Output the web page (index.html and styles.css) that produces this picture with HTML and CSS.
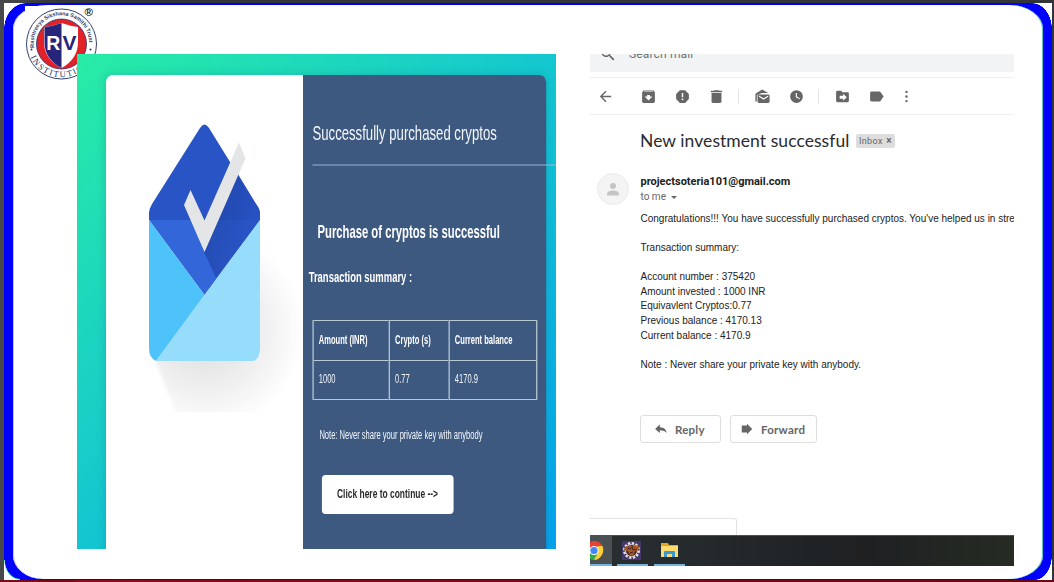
FILE: index.html
```html
<!DOCTYPE html>
<html lang="en">
<head>
<meta charset="utf-8">
<title>Successfully purchased cryptos</title>
<link rel="stylesheet" href="styles.css">
</head>
<body>
<div class="page">
<div class="frame">
<main class="slide">
  <svg class="logo" viewBox="0 0 74 74" aria-label="RV Institutions">
    <defs>
      <path id="arc-top" d="M9 43.500A27.600 27.600 0 1 1 62 43.500"/>
      <path id="arc-bottom" d="M2.500 44.500A33.800 33.800 0 0 0 68 45"/>
    </defs>
    <rect x="-1" y="-1" width="66" height="40" fill="#fff"/>
    <circle cx="35.500" cy="37" r="35" fill="#fff" stroke="#344270" stroke-width="1"/>
    <circle cx="35.500" cy="37" r="25" fill="#e32129" stroke="#26306a" stroke-width=".8"/>
    <path d="M18 20q9-1 17.500-4 8.500 3 16.500 4v15q0 17-16.500 26Q18 52 18 35z" fill="#fff"/>
    <path d="M18.500 20q9-1 17-4v45Q18.500 52 18.500 35z" fill="#26247b"/>
    <text x="20.300" y="43" class="logo-letter" fill="#fff" textLength="14" lengthAdjust="spacingAndGlyphs">R</text>
    <text x="36.500" y="43" class="logo-letter" fill="#26247b" textLength="14" lengthAdjust="spacingAndGlyphs">V</text>
    <text class="logo-ring"><textPath href="#arc-top" startOffset="3" textLength="91">Rashtreeya Sikshana Samithi Trust</textPath></text>
    <text class="logo-name"><textPath href="#arc-bottom" startOffset="6" textLength="77">INSTITUTIONS</textPath></text>
    <circle cx="5.500" cy="42.500" r="1" fill="#26306a"/><circle cx="64.500" cy="42.500" r="1" fill="#26306a"/>
    <text x="58.500" y="8.500" class="logo-reg">®</text>
  </svg>

  <section class="purchase">
    <div class="card">
      <div class="art">
        <svg width="197" height="345" viewBox="106 75 197 345">
          <defs>
            <radialGradient id="cast" gradientUnits="userSpaceOnUse" cx="205" cy="330" r="100"><stop offset="0" stop-color="#dcdcdc"/><stop offset=".4" stop-color="#e8e8e8"/><stop offset="1" stop-color="#fff"/></radialGradient>
            <linearGradient id="fold" x1="0" y1="0" x2="1" y2=".5"><stop offset="0" stop-color="#1d419e"/><stop offset="1" stop-color="#2851c5"/></linearGradient>
            <filter id="soft"><feGaussianBlur stdDeviation="1.5"/></filter>
            <clipPath id="art-edge"><path d="M106 75h197v337H106z"/></clipPath>
          </defs>
          <g clip-path="url(#art-edge)"><path d="M153 355L178 418H270L310 340 298 290 258 222z" fill="url(#cast)" filter="url(#soft)"/></g>
          <path d="M149 220v-7q0-4 3-9l48-76q4.500-7 9 0l47 76q4 5 4 10v6z" fill="#2854c5"/>
          <path d="M149 220H260L204.500 295z" fill="#3367d9"/>
          <path d="M238 174l18 30q4 5 4 10v6l-44 58-12-26z" fill="url(#fold)" opacity=".78"/>
          <path d="M149 220L204.500 295 156 361q-7-3-7-13z" fill="#4dc3f9"/>
          <path d="M260 220v127q0 14-8 14h-96z" fill="#96dcfb"/>
          <path d="M184 205l6.500-15 14 30.500 34.500-78 6.500 16L204.500 252z" fill="#e4e5e6"/>
        </svg>
      </div>
      <div class="details">
        <h1>Successfully purchased cryptos</h1>
        <div class="rule"></div>
        <h2>Purchase of cryptos is successful</h2>
        <h3>Transaction summary :</h3>
        <table>
          <tr><th class="col-amount">Amount (INR)</th><th class="col-crypto">Crypto (s)</th><th>Current balance</th></tr>
          <tr><td>1000</td><td>0.77</td><td>4170.9</td></tr>
        </table>
        <p class="note">Note: Never share your private key with anybody</p>
        <a class="continue">Click here to continue --&gt;</a>
      </div>
    </div>
  </section>

  <section class="mail">
    <div class="search">
      <svg class="search-icon" width="18" height="18" viewBox="0 0 24 24"><path d="M15.500 14h-.8l-.3-.3a6.500 6.500 0 1 0-.7.700l.3.300v.8l5 5 1.500-1.500zm-6 0a4.500 4.500 0 1 1 0-9 4.500 4.500 0 0 1 0 9z"/></svg>
      <span>Search mail</span>
    </div>
    <div class="toolbar">
      <svg viewBox="0 0 24 24"><path d="M20 11H7.800l5.600-5.600L12 4l-8 8 8 8 1.400-1.400L7.800 13H20z"/></svg>
      <svg class="after-back" viewBox="0 0 24 24"><path d="M20.500 5.200l-1.400-1.700A1.500 1.500 0 0 0 18 3H6c-.5 0-.9.200-1.200.5L3.500 5.200C3.200 5.600 3 6 3 6.500V19c0 1.100.9 2 2 2h14a2 2 0 0 0 2-2V6.500c0-.5-.2-.9-.5-1.300zM12 17.500L6.500 12H10v-2h4v2h3.500zM5.100 5l.8-1h12l1 1z"/></svg>
      <svg viewBox="0 0 24 24"><path d="M15.700 3H8.300L3 8.300v7.400L8.300 21h7.400l5.300-5.300V8.300zM12 17.300a1.300 1.300 0 1 1 0-2.600 1.300 1.300 0 0 1 0 2.600zM13 13h-2V7h2z"/></svg>
      <svg viewBox="0 0 24 24"><path d="M5 19c0 1.100.9 2 2 2h10a2 2 0 0 0 2-2V7H5zM20 4h-4l-1-1H9L8 4H4v2h16z"/></svg>
      <i class="divider"></i>
      <svg viewBox="0 0 24 24"><path d="M2 19V9q0-1 1-1.700L11.500 2 20 7H11L4 10v9zm3-8q0-2 2-2h13q2 0 2 2v8q0 2-2 2H7q-2 0-2-2zm2 1.500l6.500 4.200 6.500-4.200v-2l-6.500 4-6.500-4z" fill-rule="evenodd"/></svg>
      <svg viewBox="0 0 24 24"><path d="M12 3a9 9 0 1 0 0 18 9 9 0 0 0 0-18zm4.200 13L11 13V7h1.700v5l4.300 2.700z"/></svg>
      <i class="divider"></i>
      <svg viewBox="0 0 24 24"><path d="M20 6h-8l-2-2H5a2 2 0 0 0-2 2v12c0 1.100.9 2 2 2h14a2 2 0 0 0 2-2V8a2 2 0 0 0-1-2zm-7 12v-3H8v-4h5V8l5 5z"/></svg>
      <svg viewBox="0 0 24 24"><path d="M17.600 5.800C17.300 5.300 16.700 5 16 5H5a2 2 0 0 0-2 2v10c0 1.100.9 2 2 2h11c.7 0 1.300-.3 1.600-.8L22 12z"/></svg>
      <svg class="more" viewBox="0 0 24 24"><circle cx="12" cy="5.500" r="1.700"/><circle cx="12" cy="12" r="1.700"/><circle cx="12" cy="18.500" r="1.700"/></svg>
    </div>
    <div class="subject"><span class="subject-text">New investment successful</span><span class="tag">Inbox <b>×</b></span></div>
    <div class="message">
      <svg class="avatar" width="32" height="32" viewBox="0 0 32 32"><circle cx="16" cy="16" r="15.500" fill="#f4f4f4" stroke="#e9e9e9"/><circle cx="16" cy="13" r="3" fill="#c5c5c5"/><path d="M10 22.500v-1.500q0-3.500 6-3.500t6 3.500v1.500z" fill="#c5c5c5"/></svg>
      <div class="content">
        <div class="sender">projectsoteria101@gmail.com</div>
        <div class="to">to me <i class="caret"></i></div>
        <div class="body">Congratulations!!! You have successfully purchased cryptos. You've helped us in stre

Transaction summary:

Account number : 375420
Amount invested : 1000 INR
Equivavlent Cryptos:0.77
Previous balance : 4170.13
Current balance : 4170.9

Note : Never share your private key with anybody.</div>
        <div class="actions">
          <a class="action reply"><svg viewBox="0 0 24 24"><path d="M10 9V4l-8 8 8 7v-5c5 0 9 1.500 12 5-1-5-4-10-12-10z"/></svg>Reply</a>
          <a class="action forward"><svg viewBox="0 0 24 24"><path d="M3 6h9V3l9 9-9 9v-3H3z"/></svg>Forward</a>
        </div>
      </div>
    </div>
    <div class="popup"></div>
    <div class="taskbar">
      <div class="task chrome"><svg width="14" height="19" viewBox="0 0 14 19"><path d="M4 9.500L-4 5Q-1 0 4 0q6 0 8.500 5z" fill="#e74235"/><path d="M4 9.500L8 5h4.500q2 5-1 9.500T4 19z" fill="#fdcd3d"/><path d="M4 9.500l3 4L4 19Q0 19-4 15z" fill="#34a853"/><circle cx="4" cy="9.500" r="4.600" fill="#fff"/><circle cx="4" cy="9.500" r="3.600" fill="#4285f4"/></svg></div>
      <div class="task eclipse"><svg width="19" height="19" viewBox="0 0 19 19"><path d="M0 0h19v19H0z" fill="#44376c"/><circle cx="9.500" cy="9.500" r="7.300" fill="#4c2b29" stroke="#e4e2e8" stroke-width="2.400" stroke-dasharray="2.400 1.420"/><circle cx="9.500" cy="9.500" r="6" fill="#4c2b29" stroke="#d7d3df"/><path d="M2 8l2-3 3 1 1-2 3 2 2-2 4 1v4l-4 1-2 5-3-1-2-4-4-1z" fill="#a65829"/><path d="M5 7l3 1 2-2 1 3 4-1M8 12l3-1" fill="none" stroke="#402025" stroke-width="1"/></svg></div>
      <div class="task files"><svg width="17" height="15" viewBox="0 0 17 15"><path d="M0 0h7l1 2h9v12H0z" fill="#e4a820"/><path d="M0 3h17v11H0z" fill="#fbdc70"/><path d="M3 14V9q0-1 1-1h9q1 0 1 1v5h-3v-3H6v3z" fill="#3b96d2"/></svg></div>
    </div>
  </section>
</main>
</div>
<div class="bottom-edge"></div>
</div>
</body>
</html>
```

FILE: styles.css
```css
* { box-sizing: border-box; }
body { margin: 0; font-family: "Liberation Sans", Arial, sans-serif; }
h1, h2, h3, p { margin: 0; }

.page {
  width: 1054px; height: 582px; overflow: hidden;
  padding: 3px 2px 0 4px;
  background: linear-gradient(90deg, #48494b, #333638 60px);
  display: flex; flex-direction: column;
}
.frame {
  height: 577px; flex: none; padding: 2px 9px 1px 9px;
  background:
    radial-gradient(ellipse 22px 26px at 22px 26px, transparent 98%, #fff 100%) 0 0 / 22px 26px no-repeat,
    radial-gradient(ellipse 20px 26px at 0 26px, transparent 98%, #fff 100%) 100% 0 / 20px 26px no-repeat,
    radial-gradient(ellipse 16px 20px at 16px 0, transparent 92%, #20cba8 95%, #fff 100%) 0 100% / 16px 20px no-repeat,
    radial-gradient(ellipse 17px 25px at 0 0, transparent 98%, #fff 100%) 100% 100% / 17px 25px no-repeat,
    #0000fe;
}
.slide {
  height: 574px; background: #fff; position: relative;
  border-radius: 34px 34px 34px 30px / 24px;
  box-shadow: inset -1px 0 #54c9c6, inset 1px 0 #c4c4ff;
  display: flex; align-items: flex-start; padding: 49px 0 0 64px; gap: 34px;
}
.bottom-edge { height: 2px; flex: none; margin: 0 -2px 0 -4px; background: linear-gradient(90deg, #780b17 75px, #8e0b1c 76px, #6c0714); }

.logo { position: absolute; left: 13px; top: 2px; width: 74px; height: 74px; overflow: visible; }
.logo-letter { font: bold 21px "Liberation Sans", Arial, sans-serif; }
.logo-ring { font: bold 5.500px "Liberation Sans", Arial, sans-serif; fill: #35426d; }
.logo-name { font: 8.500px "Liberation Serif", serif; fill: #26345f; }
.logo-reg { font: bold 11.500px "Liberation Sans", Arial, sans-serif; fill: #222; }

.purchase {
  position: relative; width: 479px; height: 495px; flex: none; overflow: hidden;
  padding: 21px 10px 0 29px;
  background: linear-gradient(135deg, #28eca5 0%, #14c6d0 50%, #05a2ed 100%);
}
.card { width: 440px; height: 520px; display: flex; border-radius: 7px; background: #fff; box-shadow: 0 0 9px rgba(0, 80, 110, .23); }
.art { width: 197px; flex: none; }
.art svg { display: block; }
/* The panel is laid out at its full width and condensed horizontally. */
.details {
  width: 386px; height: 520px; flex: none; margin-right: -143px;
  transform: scaleX(.63); transform-origin: 0 0;
  background: #3e5980; color: #f3f6fa; border-radius: 0 10px 0 0 / 0 7px 0 0;
  padding: 43px 0 0 15px;
}
h1 { font-size: 20.900px; line-height: 30px; font-weight: 400; white-space: nowrap; }
.rule { width: 390px; height: 2px; margin-top: 16px; background: rgba(160, 190, 220, .45); }
h2 { margin: 54px 0 0 8px; font-size: 17.900px; line-height: 24px; white-space: nowrap; color: #fff; }
h3 { margin: 23px 0 0 -6px; font-size: 15px; line-height: 20px; color: #fff; }
table { width: 357px; height: 80px; margin-top: 33px; border-collapse: collapse; table-layout: fixed; font-size: 12px; }
th, td { border: 1px solid #b8c9d2; border-width: 1px 2px; padding: 0 8px 1px; text-align: left; height: 39px; }
th { color: #fff; }
.col-amount { width: 121px; }
.col-crypto { width: 95px; }
.note { margin: 27px 0 0 11px; font-size: 12px; line-height: 16px; }
.continue { display: flex; align-items: center; width: 209px; height: 39px; margin: 32px 0 0 15px; padding: 0 0 2px 24px; border-radius: 6px / 4px; background: #fff; color: #292929; font-size: 13.400px; font-weight: bold; white-space: nowrap; }

.mail { width: 424px; height: 512px; flex: none; overflow: hidden; display: flex; flex-direction: column; color: #222; }
.search { height: 18px; flex: none; display: flex; background: #f1f3f4; padding-left: 9px; gap: 12px; color: #707478; font: 12px/16px Roboto, sans-serif; }
.search span { margin-top: -8px; letter-spacing: .15px; }
.search-icon { margin-top: -9px; fill: #5f6368; }
.toolbar { height: 43px; flex: none; margin-top: 5px; padding: 0 0 5px 6.500px; display: flex; align-items: center; gap: 17px; border-top: 1px solid #efefef; position: relative; }
.toolbar::after { content: ""; position: absolute; left: 0; right: 0; bottom: 5px; height: 1px; background: #efefef; }
.toolbar svg { width: 17px; height: 17px; flex: none; fill: #666; }
.toolbar .after-back { margin-left: 9px; }
.toolbar .more { margin-left: -4px; }
.divider { width: 1px; height: 15px; background: #e4e4e4; margin: 0 -6px 0 -4px; }
.toolbar .divider + svg { margin-left: 4px; }
.subject { height: 30px; flex: none; margin-top: 6px; padding-left: 50px; display: flex; align-items: center; gap: 8px; }
.subject-text { width: 208px; flex: none; font: 17.500px/24px Lato, sans-serif; letter-spacing: .06px; color: #292b2e; white-space: nowrap; }
.tag { height: 14px; padding: 0 3px; border-radius: 2px; background: #ddd; color: #666; font: 9px/14px Roboto, sans-serif; letter-spacing: .35px; white-space: nowrap; }
.tag b { font-size: 10px; margin-left: 1px; }
.message { display: flex; padding: 17px 0 0 7px; gap: 12px; height: 367px; flex: none; }
.avatar { flex: none; }
.content { padding-top: 1px; min-width: 0; margin-left: -.5px; }
.sender { font: bold 11px/16px Roboto, sans-serif; }
.to { font: 10px/14px Roboto, sans-serif; color: #666; display: flex; align-items: center; gap: 5px; }
.caret { border: 3px solid transparent; border-top: 3.500px solid #666; border-bottom: 0; }
.body { margin-top: 7.500px; font-size: 10px; line-height: 14.650px; white-space: pre; }
.actions { display: flex; gap: 9px; margin: 42.500px 0 0 -.6px; }
.action { height: 28px; border: 1px solid #dedede; border-radius: 3px; display: flex; align-items: center; color: #666; font: bold 11.500px Lato, sans-serif; letter-spacing: .25px; }
.action svg { width: 14px; height: 14px; fill: #666; margin-right: 7px; }
.reply { width: 81px; padding-left: 13px; }
.forward { width: 87px; padding-left: 9px; }
.popup { width: 147px; height: 17px; flex: none; margin-top: -5px; border: 1px solid #e2e2e2; border-width: 1px 1px 0 0; border-radius: 0 3px 0 0; }
.taskbar { height: 31px; flex: none; margin-top: auto; display: flex; background: linear-gradient(90deg, #293032, #1e2022 65%, #262b23); border-top: 1px solid #4d5153; }
.task { border-bottom: 2px solid #76b2de; padding-top: 5px; }
.chrome { width: 22px; background: #4b5052; margin-right: 5px; }
.eclipse { width: 31px; padding-left: 5px; margin-right: 6px; }
.files { width: 31px; padding: 7px 0 0 7px; }
.task svg { display: block; }
```
